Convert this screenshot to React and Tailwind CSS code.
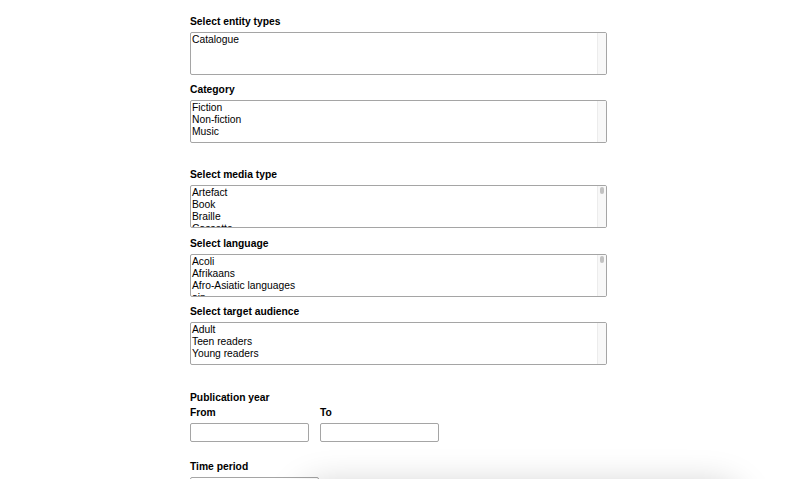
const fields = [
  { label: "Select entity types", options: ["Catalogue"], scroll: false, gap: "mb-[8px]" },
  { label: "Category", options: ["Fiction", "Non-fiction", "Music"], scroll: false, gap: "mb-[25px]" },
  { label: "Select media type", options: ["Artefact", "Book", "Braille", "Cassette"], scroll: true, gap: "mb-[9px]" },
  { label: "Select language", options: ["Acoli", "Afrikaans", "Afro-Asiatic languages", "ain"], scroll: true, gap: "mb-[8px]" },
  { label: "Select target audience", options: ["Adult", "Teen readers", "Young readers"], scroll: false, gap: "mb-[26px]" },
]

function ListBox({ options, scroll }) {
  return (
    <div className="mt-[4px] flex h-[43px] w-[417px] overflow-hidden rounded-[2px] border border-[#a5a5a5] bg-white">
      <div className="flex-1 overflow-hidden pl-[1px] pt-[1px] text-[10.3px] leading-[12px] text-black">
        {options.map((o) => (
          <div key={o}>{o}</div>
        ))}
      </div>
      <div className="relative w-[9px] border-l border-[#ececec] bg-[#f8f8f8]">
        {scroll && <div className="absolute left-[2px] top-[1px] h-[7px] w-[4px] rounded-full bg-[#c2c2c2]"></div>}
      </div>
    </div>
  )
}

function Label({ children }) {
  return <div className="h-[13px] text-[10.3px] font-bold leading-[13px] text-black">{children}</div>
}

export default function App() {
  return (
    <div className="relative h-[479px] overflow-hidden bg-white" style={{ fontFamily: '"Liberation Sans", Arial, sans-serif' }}>
      <main className="flex flex-col pl-[190px] pt-[15px]">
        {fields.map((f) => (
          <div key={f.label} className={f.gap}>
            <Label>{f.label}</Label>
            <ListBox options={f.options} scroll={f.scroll} />
          </div>
        ))}

        {/* Publication year */}
        <div>
          <Label>Publication year</Label>
          <div className="mt-[2px] flex gap-[11px]">
            <div className="w-[119px]">
              <Label>From</Label>
              <div className="mt-[4px] h-[19px] w-[119px] rounded-[2px] border border-[#a5a5a5]"></div>
            </div>
            <div className="w-[119px]">
              <Label>To</Label>
              <div className="mt-[4px] h-[19px] w-[119px] rounded-[2px] border border-[#a5a5a5]"></div>
            </div>
          </div>
        </div>

        <div className="mt-[18px]">
          <Label>Time period</Label>
          <div className="mt-[4px] h-[19px] w-[129px] rounded-[2px] border border-[#a5a5a5]"></div>
        </div>
      </main>

      {/* floating panel just below the fold */}
      <div className="absolute left-[300px] top-[486px] h-[80px] w-[440px] rounded-[24px] bg-white shadow-[0_0_36px_rgba(0,0,0,0.22)]"></div>
    </div>
  )
}
